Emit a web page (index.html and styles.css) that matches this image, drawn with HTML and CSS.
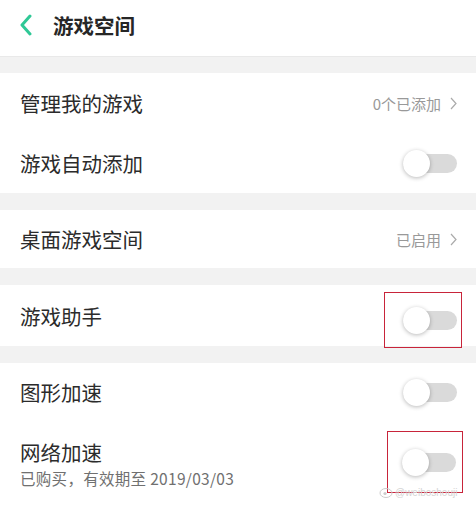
FILE: index.html
```html
<!doctype html>
<html lang="zh-CN">
<head>
    <meta charset="utf-8">
    <title>游戏空间</title>
    <link rel="stylesheet" href="styles.css">
</head>
<body>
    <div id="header-panel">
        <svg class="back" width="14" height="22" viewBox="0 0 14 22">
            <polyline points="11,2 3,11 11,20" fill="none" stroke="#2fc896" stroke-width="3" stroke-linecap="round" stroke-linejoin="round"/>
        </svg>
        <h1>游戏空间</h1>
    </div>

    <div class="section">
        <div class="row">
            <span class="label">管理我的游戏</span>
            <span class="value">0个已添加
                <svg class="chevron" width="7" height="13" viewBox="0 0 7 13"><polyline points="1,1 6,6.5 1,12" fill="none" stroke="#aaa" stroke-width="1.2"/></svg>
            </span>
        </div>
        <div class="row">
            <span class="label">游戏自动添加</span>
            <span class="switch"><span class="knob"></span></span>
        </div>
    </div>

    <div class="section">
        <div class="row short">
            <span class="label">桌面游戏空间</span>
            <span class="value">已启用
                <svg class="chevron" width="7" height="13" viewBox="0 0 7 13"><polyline points="1,1 6,6.5 1,12" fill="none" stroke="#aaa" stroke-width="1.2"/></svg>
            </span>
        </div>
    </div>

    <div class="section">
        <div class="row tall">
            <span class="label">游戏助手</span>
            <span class="mark mark-a"><span class="switch"><span class="knob"></span></span></span>
        </div>
    </div>

    <div class="section">
        <div class="row short">
            <span class="label">图形加速</span>
            <span class="switch"><span class="knob"></span></span>
        </div>
        <div class="row double">
            <div class="texts">
                <span class="label">网络加速</span>
                <span class="sub">已购买，有效期至 2019/03/03</span>
            </div>
            <span class="mark mark-b"><span class="switch"><span class="knob"></span></span></span>
        </div>
    </div>

    <div class="watermark">
        <svg width="14" height="12" viewBox="0 0 14 12"><ellipse cx="7" cy="7" rx="6" ry="4.5" fill="none" stroke="#ccc" stroke-width="1"/><circle cx="6" cy="7.5" r="1.6" fill="#ccc"/></svg>
        <span>@weiboshouji</span>
    </div>
</body>
</html>
```

FILE: styles.css
```css
body {
    margin: 0;
    padding: 0;
    width: 476px;
    height: 506px;
    overflow: hidden;
    position: relative;
    background-color: #f2f2f2;
    font-family: "Noto Sans CJK SC", "Noto Sans", sans-serif;
    color: #2b2b2b;
}
#header-panel {
    height: 56px;
    background-color: white;
    border-bottom: 1px solid #e9e9e9;
    display: flex;
    align-items: center;
    padding-left: 19px;
}
.back {
    margin-top: -6px;
    margin-right: 20px;
}
h1 {
    margin: -6px 0 0 0;
    font-size: 20.5px;
    font-weight: 700;
    color: #262626;
}
.section {
    background-color: white;
    margin-top: 16px;
}
.section + .section {
    margin-top: 17px;
}
.row {
    height: 60px;
    display: flex;
    align-items: center;
    justify-content: space-between;
    padding: 0 19px 0 20px;
}
.row.short {
    height: 58px;
}
.row.tall {
    height: 61px;
}
.row.double {
    height: 96px;
    align-items: flex-start;
}
.label {
    font-size: 20.5px;
    line-height: 24px;
    color: #2b2b2b;
}
.value {
    font-size: 15px;
    color: #999;
    display: flex;
    align-items: center;
}
.chevron {
    margin-left: 9px;
}
.texts {
    display: flex;
    flex-direction: column;
    padding-top: 19px;
}
.sub {
    font-size: 15.5px;
    letter-spacing: 0.3px;
    color: #707070;
    margin-top: 3px;
}
.switch {
    position: relative;
    width: 54px;
    height: 19px;
    border-radius: 10px;
    background-color: #dadada;
}
.knob {
    position: absolute;
    left: 0;
    top: -4px;
    width: 27px;
    height: 27px;
    border-radius: 50%;
    background-color: white;
    box-shadow: 0 1px 4px rgba(0, 0, 0, 0.28);
}
.mark {
    border: 1px solid #c8243a;
    display: flex;
    align-items: center;
    justify-content: flex-end;
    box-sizing: border-box;
    padding-right: 4px;
    margin-right: -5px;
}
.mark-a {
    width: 78px;
    height: 56px;
    margin-top: 9px;
}
.mark-b {
    width: 76px;
    height: 62px;
    margin-top: 10px;
    margin-right: -6px;
    padding-right: 6px;
}
.watermark {
    position: absolute;
    left: 379px;
    top: 486px;
    display: flex;
    align-items: center;
    gap: 2px;
    font-family: "Liberation Sans", sans-serif;
    font-size: 10px;
    color: #d4d4d4;
}
```
